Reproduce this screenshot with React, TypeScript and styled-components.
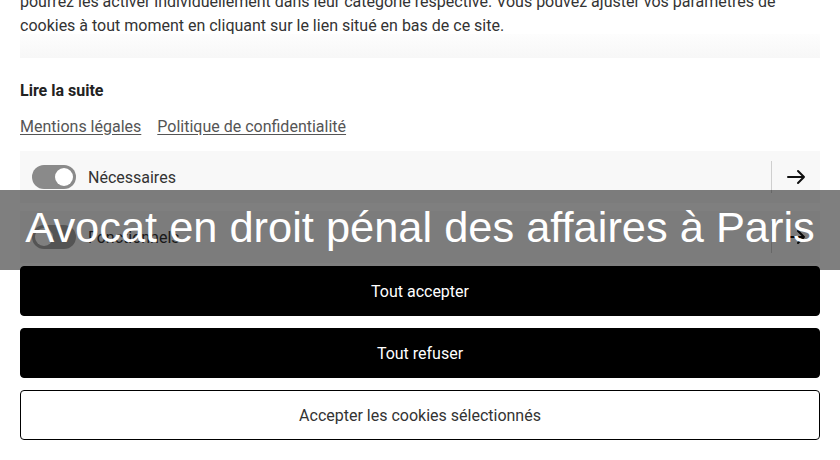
import React from "react";
import styled, { createGlobalStyle } from "styled-components";

const Global = createGlobalStyle`
  html, body { margin: 0; padding: 0; background: #fff; }
  body { font-family: Roboto, "Liberation Sans", sans-serif; overflow: hidden; }
  * { box-sizing: border-box; }
`;

const Page = styled.div`
  width: 840px;
  height: 460px;
  overflow: hidden;
  position: relative;
`;

const Content = styled.div`
  padding: 0 20px;
  margin-top: -10px;
  display: flex;
  flex-direction: column;
`;

const Paragraph = styled.p`
  margin: 0;
  font-size: 16px;
  line-height: 24px;
  color: #333;
`;

const Fade = styled.div`
  height: 24px;
  margin-top: -4px;
  background: linear-gradient(to bottom, #fdfdfd, #f7f7f7);
`;

const ReadMore = styled.div`
  margin-top: 21px;
  font-size: 16px;
  line-height: 24px;
  font-weight: 700;
  color: #222;
`;

const Links = styled.div`
  margin-top: 12px;
  display: flex;
  gap: 16px;
  font-size: 16px;
  line-height: 24px;
`;

const Link = styled.a`
  color: #555;
  text-decoration: underline;
  text-underline-offset: 2px;
`;

const Categories = styled.div`
  margin-top: 12px;
  display: flex;
  flex-direction: column;
  gap: 8px;
`;

const Row = styled.div`
  height: 52px;
  background: #f8f8f8;
  display: flex;
  align-items: center;
  padding-left: 12px;
`;

const Toggle = styled.span<{ $on?: boolean }>`
  width: 44px;
  height: 24px;
  border-radius: 12px;
  background: ${(p) => (p.$on ? "#8a8a8a" : "#a8a8a8")};
  position: relative;
  flex: none;
  &::after {
    content: "";
    position: absolute;
    top: 3px;
    left: ${(p) => (p.$on ? "23px" : "3px")};
    width: 18px;
    height: 18px;
    border-radius: 50%;
    background: #fff;
  }
`;

const Label = styled.span`
  margin-left: 12px;
  font-size: 16px;
  color: #333;
  flex: 1;
`;

const ArrowCell = styled.div`
  width: 49px;
  height: 32px;
  border-left: 1px solid #cfcfcf;
  display: flex;
  align-items: center;
  justify-content: center;
`;

const Buttons = styled.div`
  margin-top: 3px;
  display: flex;
  flex-direction: column;
  gap: 12px;
`;

const Button = styled.button<{ $outline?: boolean }>`
  height: 50px;
  width: 100%;
  border-radius: 4px;
  border: 1px solid #000;
  background: ${(p) => (p.$outline ? "#fff" : "#000")};
  color: ${(p) => (p.$outline ? "#333" : "#fff")};
  font-family: Roboto, "Liberation Sans", sans-serif;
  font-size: 16px;
`;

const Band = styled.div`
  position: absolute;
  left: 0;
  right: 0;
  top: 190px;
  height: 80px;
  padding-bottom: 4px;
  background: rgba(0, 0, 0, 0.5);
  display: flex;
  align-items: center;
  justify-content: center;
`;

const Title = styled.h1`
  margin: 0;
  font-family: "Liberation Sans", Arial, sans-serif;
  font-weight: 400;
  font-size: 43.4px;
  color: #fff;
  white-space: nowrap;
  line-height: 1;
`;

const Arrow = () => (
  <svg width="20" height="20" viewBox="0 0 20 20" fill="none" stroke="#111" strokeWidth="2" strokeLinecap="round" strokeLinejoin="round">
    <path d="M2 10h16M12 4l6 6-6 6" />
  </svg>
);

export default function App() {
  return (
    <Page>
      <Global />
      <Content>
        <Paragraph>
          pourrez les activer individuellement dans leur catégorie respective. Vous pouvez ajuster vos paramètres de
          cookies à tout moment en cliquant sur le lien situé en bas de ce site.
        </Paragraph>
        <Fade />
        <ReadMore>Lire la suite</ReadMore>
        <Links>
          <Link>Mentions légales</Link>
          <Link>Politique de confidentialité</Link>
        </Links>
        <Categories>
          <Row>
            <Toggle $on />
            <Label>Nécessaires</Label>
            <ArrowCell>
              <Arrow />
            </ArrowCell>
          </Row>
          <Row>
            <Toggle />
            <Label>Fonctionnels</Label>
            <ArrowCell>
              <Arrow />
            </ArrowCell>
          </Row>
        </Categories>
        <Buttons>
          <Button>Tout accepter</Button>
          <Button>Tout refuser</Button>
          <Button $outline>Accepter les cookies sélectionnés</Button>
        </Buttons>
      </Content>
      <Band>
        <Title>Avocat en droit pénal des affaires à Paris</Title>
      </Band>
    </Page>
  );
}
